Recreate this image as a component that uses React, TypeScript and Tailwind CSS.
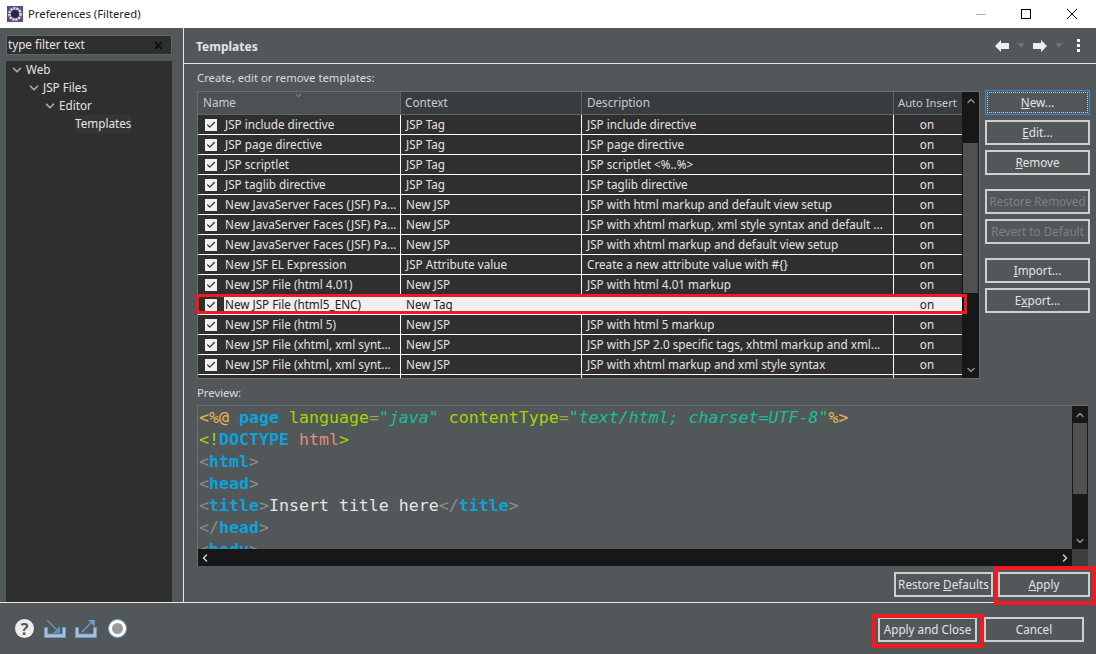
import React from 'react';
import { ChevronDown, ChevronUp, ChevronLeft, ChevronRight, X, Check } from 'lucide-react';

interface Row {
  name: string;
  context: string;
  description: string;
  selected?: boolean;
}

const rows: Row[] = [
  { name: 'JSP include directive', context: 'JSP Tag', description: 'JSP include directive' },
  { name: 'JSP page directive', context: 'JSP Tag', description: 'JSP page directive' },
  { name: 'JSP scriptlet', context: 'JSP Tag', description: 'JSP scriptlet <%..%>' },
  { name: 'JSP taglib directive', context: 'JSP Tag', description: 'JSP taglib directive' },
  { name: 'New JavaServer Faces (JSF) Pa...', context: 'New JSP', description: 'JSP with html markup and default view setup' },
  { name: 'New JavaServer Faces (JSF) Pa...', context: 'New JSP', description: 'JSP with xhtml markup, xml style syntax and default ...' },
  { name: 'New JavaServer Faces (JSF) Pa...', context: 'New JSP', description: 'JSP with xhtml markup and default view setup' },
  { name: 'New JSF EL Expression', context: 'JSP Attribute value', description: 'Create a new attribute value with #{}' },
  { name: 'New JSP File (html 4.01)', context: 'New JSP', description: 'JSP with html 4.01 markup' },
  { name: 'New JSP File (html5_ENC)', context: 'New Tag', description: '', selected: true },
  { name: 'New JSP File (html 5)', context: 'New JSP', description: 'JSP with html 5 markup' },
  { name: 'New JSP File (xhtml, xml synt...', context: 'New JSP', description: 'JSP with JSP 2.0 specific tags, xhtml markup and xml...' },
  { name: 'New JSP File (xhtml, xml synt...', context: 'New JSP', description: 'JSP with xhtml markup and xml style syntax' },
  { name: '', context: '', description: '' },
];

const Btn = ({
  children,
  width = 'w-[105px]',
  disabled,
  focused,
}: {
  children: React.ReactNode;
  width?: string;
  disabled?: boolean;
  focused?: boolean;
}) => {
  if (focused) {
    return (
      <div className={`${width} h-[25px] shrink-0 border border-[#2f8fe0] p-[1px]`}>
        <div className="flex h-full items-center justify-center border border-dotted border-[#d0d0d0] text-[#e4e4e4]">
          {children}
        </div>
      </div>
    );
  }
  return (
    <div
      className={`${width} flex h-[25px] shrink-0 items-center justify-center border-2 border-[#cfcfcf] ${
        disabled ? 'text-[#7d8284]' : 'text-[#e4e4e4]'
      }`}
    >
      {children}
    </div>
  );
};

const TreeItem = ({ label, indent, open }: { label: string; indent: string; open?: boolean }) => (
  <div className={`flex h-[18px] items-center ${indent}`}>
    {open ? (
      <ChevronDown className="mr-[2px] h-[14px] w-[14px] text-[#a9a9a9]" strokeWidth={3} />
    ) : (
      <span className="w-[16px]" />
    )}
    <span className={open ? '' : 'bg-[#353535]'}>{label}</span>
  </div>
);

const ArrowIcon = ({ dir }: { dir: 'left' | 'right' }) => (
  <svg width="14" height="12" viewBox="0 0 14 12" className={dir === 'right' ? 'rotate-180' : ''}>
    <path d="M0 6 L6 0 V3 H14 V9 H6 V12 Z" fill="#eeeeee" />
  </svg>
);

const Caret = () => (
  <svg width="8" height="5" viewBox="0 0 8 5">
    <path d="M0 0 H8 L4 5 Z" fill="#6d7274" />
  </svg>
);

const AppIcon = () => (
  <svg width="16" height="16" viewBox="0 0 16 16">
    <rect width="16" height="16" fill="#5b4a86" />
    <circle cx="8" cy="8" r="5.6" fill="none" stroke="#d8d8d8" strokeWidth="2.6" strokeDasharray="2.2 0.8" />
    <circle cx="8" cy="8" r="4" fill="#2b2748" />
  </svg>
);

const TrayIcon = ({ out }: { out?: boolean }) => (
  <svg width="22" height="20" viewBox="0 0 22 20">
    <path d="M0.5 8.5 V18.5 H21.5 V8.5 H18.5 V15 H3.5 V8.5 Z" fill="#a9c0e0" stroke="#6f96bd" strokeWidth="1" />
    {out ? (
      <>
        <path d="M7 13 L17 3" fill="none" stroke="#6c9ac4" strokeWidth="1.4" />
        <path d="M13 1 H20 V8 Z" fill="#6c9ac4" />
      </>
    ) : (
      <>
        <path d="M3 1 L14 12" fill="none" stroke="#5d92bd" strokeWidth="1.4" />
        <path d="M16 7 V14 H9 Z" fill="#5d92bd" />
      </>
    )}
  </svg>
);

const ScrollBtn = ({ children }: { children: React.ReactNode }) => (
  <div className="flex h-[17px] w-full shrink-0 items-center justify-center text-[#8d8d8d]">{children}</div>
);

const Tag = ({ children }: { children: React.ReactNode }) => <span className="text-[#8a8d8f]">{children}</span>;
const Kw = ({ children }: { children: React.ReactNode }) => <span className="font-bold text-[#0ba3d9]">{children}</span>;

const App = () => {
  return (
    <div
      className="relative flex h-[654px] w-[1096px] flex-col overflow-hidden bg-[#52575a] text-[11.7px] text-[#e4e4e4]"
      style={{ fontFamily: '"Noto Sans", "Noto Sans CJK KR", sans-serif' }}
    >
      {/* title bar */}
      <div className="flex h-[28px] shrink-0 items-center bg-white pl-[7px] text-[#222]">
        <AppIcon />
        <span className="ml-[5px] text-[11.3px]">Preferences (Filtered)</span>
        <div className="ml-auto flex items-center pr-[19px]">
          <span className="mr-[35px] h-[1px] w-[10px] bg-[#b5b5b5]" />
          <span className="mr-[36px] h-[10px] w-[10px] border border-black" />
          <svg width="10" height="10" viewBox="0 0 10 10">
            <path d="M0 0 L10 10 M10 0 L0 10" stroke="#000" strokeWidth="1" />
          </svg>
        </div>
      </div>

      <div className="flex h-[574px] shrink-0">
        {/* left side */}
        <div className="flex w-[183px] shrink-0 flex-col pl-[6px] pr-[11px] pt-[7px]">
          <div className="flex h-[20px] shrink-0 items-center justify-between border border-[#5f6466] bg-[#2f2f2f] pl-[1px] pr-[7px]">
            <span>type filter text</span>
            <X className="h-[11px] w-[11px] text-[#111]" strokeWidth={4} />
          </div>
          <div className="mt-[6px] flex-1 bg-[#2f2f2f]">
            <TreeItem label="Web" indent="pl-[4px]" open />
            <TreeItem label="JSP Files" indent="pl-[21px]" open />
            <TreeItem label="Editor" indent="pl-[37px]" open />
            <TreeItem label="Templates" indent="pl-[53px]" />
          </div>
        </div>
        <div className="w-[1px] shrink-0 bg-[#e6e6e6]" />

        {/* right side */}
        <div className="flex flex-1 flex-col">
          <div className="flex h-[35px] shrink-0 items-center pl-[12px] pr-[16px]">
            <span className="mt-[3px] text-[12px] font-bold">Templates</span>
            <div className="ml-auto flex items-center">
              <ArrowIcon dir="left" />
              <span className="ml-[8px] mr-[8px]"><Caret /></span>
              <ArrowIcon dir="right" />
              <span className="ml-[8px] mr-[14px]"><Caret /></span>
              <div className="flex flex-col gap-[2px]">
                <span className="h-[3px] w-[3px] bg-white" />
                <span className="h-[3px] w-[3px] bg-white" />
                <span className="h-[3px] w-[3px] bg-white" />
              </div>
            </div>
          </div>
          <div className="h-[1px] shrink-0 bg-[#e6e6e6]" />

          <div className="flex flex-1 flex-col pl-[13px] pr-[6px] pt-[6px]">
            <div className="h-[21px] shrink-0 text-[11.3px] leading-[15px] text-[#dcdcdc]">Create, edit or remove templates:</div>

            <div className="flex h-[288px] shrink-0">
              {/* table */}
              <div className="flex w-[783px] shrink-0 border border-[#6a6e70]">
                <div className="min-w-0 flex-1 overflow-hidden">
                  <div className="relative flex h-[23px] border-b border-[#5f6466] bg-[#393d40] text-[#c8cccd]">
                    <div className="w-[203px] border-r border-[#5f6466] bg-[#4c5154] pl-[5px] leading-[21px]">Name</div>
                    <ChevronDown className="absolute left-[96px] top-[-1px] h-[9px] w-[9px] text-[#c8cccd]" strokeWidth={1.5} />
                    <div className="w-[181px] border-r border-[#5f6466] pl-[4px] leading-[21px]">Context</div>
                    <div className="w-[312px] border-r border-[#5f6466] pl-[5px] leading-[21px]">Description</div>
                    <div className="flex-1 pl-[4px] text-[11.2px] leading-[21px]">Auto Insert</div>
                  </div>
                  {rows.map((row, i) => (
                    <div
                      key={i}
                      className={`flex h-[20px] border-b border-white ${row.selected ? 'bg-[#efefef] text-[#222]' : 'bg-[#2f2f2f]'}`}
                    >
                      <div className={`flex w-[26px] shrink-0 items-center pl-[7px] ${row.selected ? 'bg-[#2f2f2f]' : ''}`}>
                        <span className={`flex h-[12px] w-[12px] items-center justify-center bg-[#f2f2f2] ${row.name ? '' : 'hidden'}`}>
                          <Check className="h-[10px] w-[10px] text-[#333]" strokeWidth={3} />
                        </span>
                      </div>
                      <div className={`w-[177px] shrink-0 overflow-hidden whitespace-nowrap pl-[1px] leading-[19px] ${row.selected ? '' : 'border-r border-white'}`}>
                        {row.name}
                      </div>
                      <div className={`w-[181px] shrink-0 overflow-hidden whitespace-nowrap pl-[5px] leading-[19px] ${row.selected ? '' : 'border-r border-white'}`}>
                        {row.context}
                      </div>
                      <div className={`w-[312px] shrink-0 overflow-hidden whitespace-nowrap pl-[5px] leading-[19px] ${row.selected ? '' : 'border-r border-white'}`}>
                        {row.description}
                      </div>
                      <div className="flex-1 pr-[2px] text-center leading-[19px]">{row.name ? 'on' : ''}</div>
                    </div>
                  ))}
                </div>
                <div className="flex w-[17px] shrink-0 flex-col bg-[#171717]">
                  <ScrollBtn><ChevronUp className="h-[12px] w-[12px]" strokeWidth={3} /></ScrollBtn>
                  <div className="ml-[1px] mt-[34px] h-[150px] w-[15px] bg-[#505050]" />
                  <div className="flex-1" />
                  <ScrollBtn><ChevronDown className="h-[12px] w-[12px]" strokeWidth={3} /></ScrollBtn>
                </div>
              </div>

              {/* side buttons */}
              <div className="ml-[5px] mt-[-1px] flex flex-col">
                <Btn focused><span><u>N</u>ew...</span></Btn>
                <div className="mt-[5px]"><Btn><span><u>E</u>dit...</span></Btn></div>
                <div className="mt-[5px]"><Btn><span><u>R</u>emove</span></Btn></div>
                <div className="mt-[14px]"><Btn disabled>Restore Removed</Btn></div>
                <div className="mt-[5px]"><Btn disabled>Revert to Default</Btn></div>
                <div className="mt-[14px]"><Btn><span><u>I</u>mport...</span></Btn></div>
                <div className="mt-[5px]"><Btn><span>E<u>x</u>port...</span></Btn></div>
              </div>
            </div>

            <div className="mt-[6px] h-[20px] shrink-0 text-[11.3px] leading-[16px] text-[#dcdcdc]">Preview:</div>

            {/* editor */}
            <div className="flex h-[161px] w-[891px] shrink-0 flex-col border-l border-t border-[#6a6e70]">
              <div className="flex min-h-0 flex-1">
                <div
                  className="flex-1 overflow-hidden whitespace-pre pl-[1px] pt-[1px] text-[16.6px] leading-[22px] text-[#e6e6e6]"
                  style={{ fontFamily: '"DejaVu Sans Mono", monospace' }}
                >
                  <div>
                    <span className="text-[#e8b64c]">&lt;%@</span> <Kw>page</Kw> <span className="text-[#a2d800]">language</span>
                    <span className="text-[#8fa84a]">=</span><span className="italic text-[#17bf9c]">"java"</span>{' '}
                    <span className="text-[#a2d800]">contentType</span><span className="text-[#8fa84a]">=</span>
                    <span className="italic text-[#17bf9c]">"text/html; charset=UTF-8"</span>
                    <span className="text-[#e8b64c]">%&gt;</span>
                  </div>
                  <div>
                    <span className="text-[#a2d800]">&lt;!</span><Kw>DOCTYPE</Kw> <span className="text-[#e38d78]">html</span>
                    <span className="text-[#a2d800]">&gt;</span>
                  </div>
                  <div><Tag>&lt;</Tag><Kw>html</Kw><Tag>&gt;</Tag></div>
                  <div><Tag>&lt;</Tag><Kw>head</Kw><Tag>&gt;</Tag></div>
                  <div>
                    <Tag>&lt;</Tag><Kw>title</Kw><Tag>&gt;</Tag>Insert title here<Tag>&lt;/</Tag><Kw>title</Kw><Tag>&gt;</Tag>
                  </div>
                  <div><Tag>&lt;/</Tag><Kw>head</Kw><Tag>&gt;</Tag></div>
                  <div><Tag>&lt;</Tag><Kw>body</Kw><Tag>&gt;</Tag></div>
                </div>
                <div className="flex w-[16px] shrink-0 flex-col bg-[#171717]">
                  <ScrollBtn><ChevronUp className="h-[12px] w-[12px]" strokeWidth={3} /></ScrollBtn>
                  <div className="mx-[1px] h-[71px] w-[14px] bg-[#505050]" />
                  <div className="flex-1" />
                  <ScrollBtn><ChevronDown className="h-[12px] w-[12px]" strokeWidth={3} /></ScrollBtn>
                </div>
              </div>
              <div className="flex h-[17px] shrink-0">
                <div className="flex flex-1 items-center justify-between bg-[#171717] px-[1px] text-[#cfcfcf]">
                  <ChevronLeft className="h-[12px] w-[12px]" strokeWidth={3} />
                  <ChevronRight className="h-[12px] w-[12px]" strokeWidth={3} />
                </div>
                <div className="w-[16px] shrink-0 bg-[#3d3d3d]" />
              </div>
            </div>

            <div className="mt-[6px] flex justify-end gap-[5px]">
              <Btn width="w-[99px]"><span>Restore <u>D</u>efaults</span></Btn>
              <Btn width="w-[92px]"><span><u>A</u>pply</span></Btn>
            </div>
          </div>
        </div>
      </div>

      <div className="h-[1px] shrink-0 bg-[#e6e6e6]" />

      {/* bottom bar */}
      <div className="flex flex-1 items-center pl-[15px] pr-[12px]">
        <span className="flex h-[19px] w-[19px] items-center justify-center rounded-full bg-[#eeeeee] text-[16px] font-bold text-[#52575a]">?</span>
        <span className="ml-[10px] flex"><TrayIcon /></span>
        <span className="ml-[9px] flex"><TrayIcon out /></span>
        <span className="ml-[11px] flex h-[19px] w-[19px] items-center justify-center rounded-full border border-[#6aa5d8] bg-white">
          <span className="h-[11px] w-[11px] rounded-full bg-[#9a9a9a]" />
        </span>
        <div className="ml-auto mt-[2px] flex gap-[7px]">
          <Btn width="w-[99px]">Apply and Close</Btn>
          <Btn width="w-[100px]">Cancel</Btn>
        </div>
      </div>

      {/* red annotation boxes */}
      <div className="absolute left-[196px] top-[294px] h-[20px] w-[771px] border-[3px] border-[#ed1c24]" />
      <div className="absolute left-[994px] top-[566px] h-[39px] w-[102px] border-[4px] border-[#ed1c24]" />
      <div className="absolute left-[872px] top-[614px] h-[34px] w-[112px] border-[4px] border-[#ed1c24]" />
    </div>
  );
};

export default App;
